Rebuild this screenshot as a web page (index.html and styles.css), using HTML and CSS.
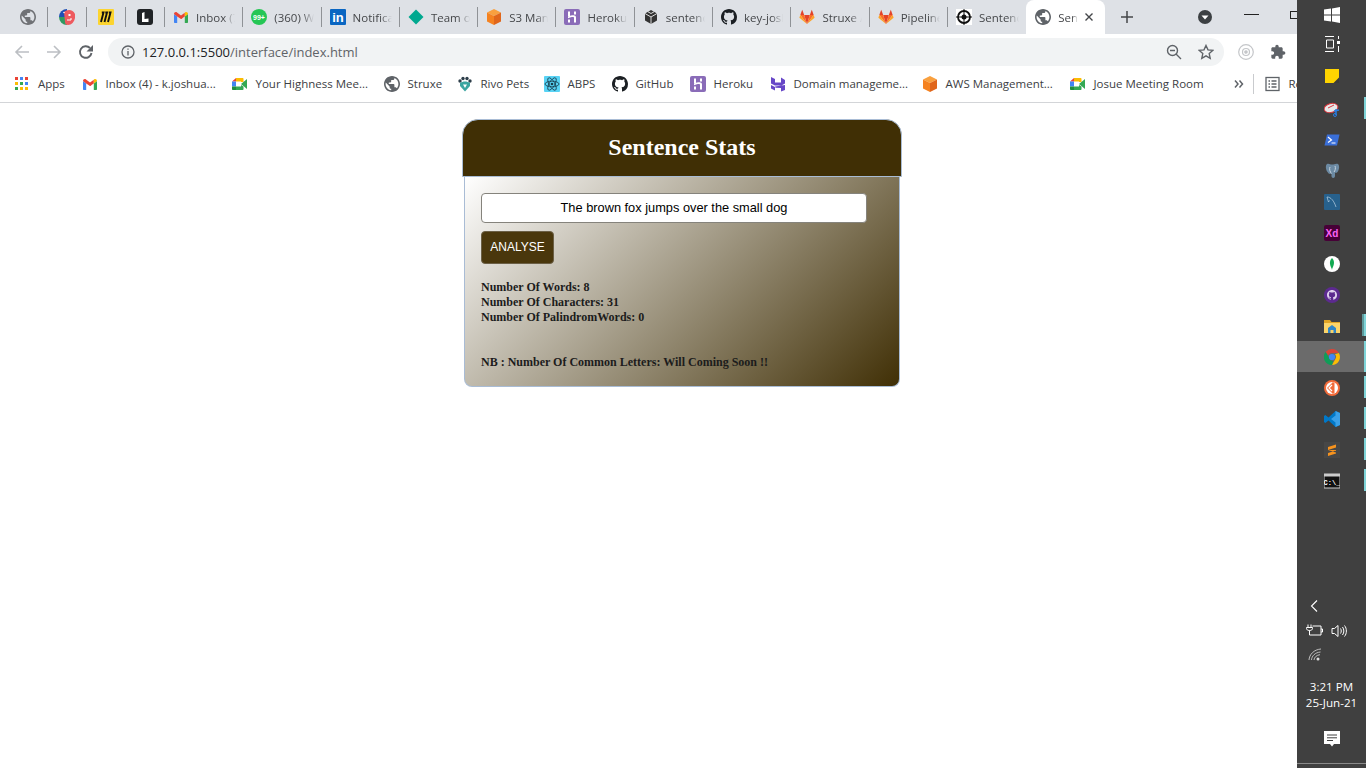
FILE: index.html
```html
<!DOCTYPE html>
<html lang="en">
<head>
  <meta http-equiv="Content-Type" content="text/html; charset=UTF-8">
  <title>Sentence Stats</title>
  <link rel="stylesheet" href="styles.css">
</head>
<body>
  <svg class="defs" aria-hidden="true">
    <symbol id="globe" viewBox="2 2 20 20"><path d="M12 2C6.48 2 2 6.48 2 12s4.48 10 10 10 10-4.48 10-10S17.52 2 12 2zm-1 17.93c-3.95-.49-7-3.85-7-7.93 0-.62.08-1.21.21-1.79L9 15v1c0 1.1.9 2 2 2v1.93zm6.9-2.54c-.26-.81-1-1.39-1.9-1.39h-1v-3c0-.55-.45-1-1-1H8v-2h2c.55 0 1-.45 1-1V7h2c1.1 0 2-.9 2-2v-.41c2.93 1.19 5 4.06 5 7.41 0 2.08-.8 3.97-2.1 5.39z"/></symbol>
    <symbol id="github" viewBox="0 0 16 16"><path d="M8 0C3.58 0 0 3.58 0 8c0 3.54 2.29 6.53 5.47 7.59.4.07.55-.17.55-.38 0-.19-.01-.82-.01-1.49-2.01.37-2.53-.49-2.69-.94-.09-.23-.48-.94-.82-1.13-.28-.15-.68-.52-.01-.53.63-.01 1.08.58 1.23.82.72 1.21 1.87.87 2.33.66.07-.52.28-.87.51-1.07-1.78-.2-3.64-.89-3.64-3.95 0-.87.31-1.59.82-2.15-.08-.2-.36-1.02.08-2.12 0 0 .67-.21 2.2.82.64-.18 1.32-.27 2-.27.68 0 1.36.09 2 .27 1.53-1.04 2.2-.82 2.2-.82.44 1.1.16 1.92.08 2.12.51.56.82 1.27.82 2.15 0 3.07-1.87 3.75-3.65 3.95.29.25.54.73.54 1.48 0 1.07-.01 1.93-.01 2.2 0 .21.15.46.55.38A8.013 8.013 0 0016 8c0-4.42-3.58-8-8-8z"/></symbol>
    <symbol id="gmail" viewBox="0 0 16 16">
      <path fill="#4285f4" d="M1 5v8c0 .6.4 1 1 1h2.2V7.4z"/>
      <path fill="#34a853" d="M15 5v8c0 .6-.4 1-1 1h-2.2V7.4z"/>
      <path fill="#ea4335" d="M1 5c0-1.700 1.800-2.500 3-1.500L8 6.600l1.500 2.400L8 10 4.200 7.400 1 5z"/>
      <path fill="#ea4335" d="M8 6.600l3.800-2.900v3.700L8 10z"/>
      <path fill="#fbbc04" d="M11.800 3.700l.2-.2c1.200-1 3-.2 3 1.500l-3.200 2.400z"/>
    </symbol>
    <symbol id="meet" viewBox="0 0 16 16">
      <path fill="#ea4335" d="M0 5.500L4 2v3.500z"/>
      <path fill="#fbbc04" d="M4 2h6.500c.6 0 1 .4 1 1v3L9 6V5.500H4z"/>
      <path fill="#4285f4" d="M0 5.500h4v5H0z"/>
      <path fill="#1e8e3e" d="M0 10.500h4V14H1c-.6 0-1-.4-1-1z"/>
      <path fill="#34a853" d="M4 10.500h5V9l2.500 1.500V13c0 .6-.4 1-1 1H4z"/>
      <path fill="#34a853" d="M9 8l6-5v10L9 8z"/>
    </symbol>
    <symbol id="heroku" viewBox="0 0 16 16">
      <rect width="16" height="16" rx="2" fill="#8a6cb8"/>
      <path fill="#fff" d="M4 2.500h2v4.500H4zM4 10.500h2v3H4zM10 2.500h2v3h-2zM4 7.300c2-.6 4-1.100 5.500-1.100 1.500 0 2.500.8 2.500 2.200v5.100h-2V9c0-.8-.4-1-1-1-1.200 0-3 .5-5 1.200z"/>
    </symbol>
    <symbol id="gitlab" viewBox="0 0 16 16">
      <polygon fill="#e24329" points="8,15 10.800,6 5.200,6"/>
      <polygon fill="#fc6d26" points="8,15 5.200,6 1.300,6"/>
      <polygon fill="#fc6d26" points="8,15 10.800,6 14.700,6"/>
      <polygon fill="#fca326" points="1.300,6 .4,8.800 8,15"/>
      <polygon fill="#fca326" points="14.700,6 15.600,8.800 8,15"/>
      <polygon fill="#e24329" points="1.300,6 5.200,6 3.200,.8"/>
      <polygon fill="#e24329" points="14.700,6 10.800,6 12.800,.8"/>
    </symbol>
    <symbol id="awsbox" viewBox="0 0 16 16">
      <polygon fill="#f9a03f" points="8,0 15,3.500 8,7 1,3.500"/>
      <polygon fill="#f58220" points="1,3.500 8,7 8,16 1,12.500"/>
      <polygon fill="#e0661b" points="15,3.500 8,7 8,16 15,12.500"/>
    </symbol>
  </svg>

  <div class="tabstrip">
    <div class="tab pinned"><svg class="ico soft"><use href="#globe"/></svg></div>
    <div class="tab pinned">
      <svg class="ico" viewBox="0 0 16 16"><path fill="#1f4fb5" d="M8 0a8 8 0 0 0-8 8h8z"/><path fill="#2f9a62" d="M0 8a8 8 0 0 0 8 8V8z"/><path fill="#ee5a5f" d="M5 3c3-3 9-3 11 2 1 5-2 11-7 11-2 0-3-1-3-3z"/><rect x="9.500" y="5" width="2" height="2" fill="#fff"/><path d="M8 11h4v-2" stroke="#fff" fill="none"/><circle cx="5" cy="3.500" r=".8" fill="#fff"/></svg>
    </div>
    <div class="tab pinned">
      <svg class="ico" viewBox="0 0 16 16"><rect width="16" height="16" rx="1" fill="#fcd42f"/><path d="M3 13L5.500 3.500H3.800M6.500 13L9 3.500H7.300M10 13l2.500-9.500h-1.700" stroke="#111" stroke-width="1.900" fill="none"/></svg>
    </div>
    <div class="tab pinned">
      <svg class="ico" viewBox="0 0 16 16"><rect width="16" height="16" rx="3" fill="#202326"/><path fill="#fff" d="M5 4l2.500-1v7l4-.5V13H5z"/></svg>
    </div>
    <div class="tab"><svg class="ico"><use href="#gmail"/></svg><span class="tab-title">Inbox (7)</span></div>
    <div class="tab">
      <svg class="ico" viewBox="0 0 16 16"><circle cx="8" cy="8" r="8" fill="#25c655"/><text x="8" y="11" class="badge-num">99+</text></svg>
      <span class="tab-title">(360) WhatsApp</span>
    </div>
    <div class="tab">
      <svg class="ico" viewBox="0 0 16 16"><rect width="16" height="16" rx="1" fill="#0a66c2"/><text x="8" y="13" class="li-text">in</text></svg>
      <span class="tab-title">Notifications</span>
    </div>
    <div class="tab">
      <svg class="ico" viewBox="0 0 16 16"><polygon fill="#00a88f" points="8,.5 15.500,8 8,15.500 .5,8"/></svg>
      <span class="tab-title">Team overview</span>
    </div>
    <div class="tab"><svg class="ico"><use href="#awsbox"/></svg><span class="tab-title">S3 Management</span></div>
    <div class="tab"><svg class="ico"><use href="#heroku"/></svg><span class="tab-title">Heroku</span></div>
    <div class="tab">
      <svg class="ico" viewBox="0 0 16 16"><polygon fill="#333" points="8,1 14,4.500 14,11.500 8,15 2,11.500 2,4.500"/><path d="M2 4.500l6 3.500 6-3.500M8 8v7M5 2.800l3 1.700 3-1.700" stroke="#ddd" fill="none"/></svg>
      <span class="tab-title">sentence-stats</span>
    </div>
    <div class="tab"><svg class="ico dark"><use href="#github"/></svg><span class="tab-title">key-joshua</span></div>
    <div class="tab"><svg class="ico"><use href="#gitlab"/></svg><span class="tab-title">Struxe / api</span></div>
    <div class="tab"><svg class="ico"><use href="#gitlab"/></svg><span class="tab-title">Pipelines</span></div>
    <div class="tab noline">
      <svg class="ico" viewBox="0 0 16 16"><rect width="16" height="16" fill="#fff"/><circle cx="8" cy="8" r="6" fill="none" stroke="#111" stroke-width="1.800"/><circle cx="8" cy="8" r="2.500" fill="#111"/><path d="M8 0v16M0 8h16" stroke="#111"/></svg>
      <span class="tab-title">Sentence Stats</span>
    </div>
    <div class="tab active">
      <svg class="ico gray"><use href="#globe"/></svg>
      <span class="tab-title">Sentence Stats</span>
      <svg class="tab-close" viewBox="0 0 8 8"><path d="M.5.5l7 7M7.500.5l-7 7"/></svg>
    </div>
    <svg class="newtab" viewBox="0 0 12 12"><path d="M6 0v12M0 6h12"/></svg>
    <svg class="tabsearch" viewBox="0 0 14 14"><circle cx="7" cy="7" r="7"/><path d="M3.500 5.500h7L7 9.500z" fill="#fff"/></svg>
    <div class="win-min"></div>
    <div class="win-max"></div>
  </div>

  <div class="toolbar">
    <svg class="tool faded" viewBox="0 0 16 16"><path d="M15 8H2M8 2L2 8l6 6"/></svg>
    <svg class="tool faded" viewBox="0 0 16 16"><path d="M1 8h13M8 2l6 6-6 6"/></svg>
    <svg class="tool" viewBox="0 0 16 16"><path d="M13.500 9A5.800 5.800 0 1 1 12 4"/><path class="solid" d="M15 1v6.500H8.500z"/></svg>
    <div class="omnibox">
      <svg class="info" viewBox="0 0 14 14"><circle cx="7" cy="7" r="6"/><path d="M7 6v4.500M7 3.500v1.300"/></svg>
      <span class="url"><b>127.0.0.1</b><b>:5500</b>/interface/index.html</span>
      <svg class="zoomout" viewBox="0 0 16 16"><circle cx="6.500" cy="6.500" r="5"/><path d="M10 10l5 5M4 6.500h5"/></svg>
      <svg class="star" viewBox="0 0 16 16"><path d="M8 1.500l2 4.400 4.800.5-3.600 3.200 1 4.700L8 11.900l-4.200 2.400 1-4.700L1.200 6.400 6 5.900z"/></svg>
    </div>
    <svg class="ext-ring" viewBox="0 0 16 16"><circle cx="8" cy="8" r="7.300"/><circle cx="8" cy="8" r="3.500"/><circle cx="8" cy="8" r="1.200" class="solid"/></svg>
    <svg class="puzzle" viewBox="0 0 24 24"><path d="M20.500 11H19V7c0-1.100-.9-2-2-2h-4V3.500C13 2.120 11.880 1 10.500 1S8 2.120 8 3.500V5H4c-1.100 0-1.990.9-1.990 2v3.800H3.500c1.490 0 2.700 1.210 2.700 2.700s-1.210 2.700-2.700 2.700H2V20c0 1.100.9 2 2 2h3.800v-1.500c0-1.490 1.210-2.700 2.700-2.700 1.490 0 2.700 1.210 2.700 2.700V22H17c1.100 0 2-.9 2-2v-4h1.500c1.380 0 2.500-1.120 2.500-2.500S21.880 11 20.500 11z"/></svg>
  </div>

  <div class="bookmarks">
    <div class="bm">
      <svg class="ico" viewBox="0 0 14 14">
        <rect width="3" height="3" fill="#ea4335"/><rect x="5" width="3" height="3" fill="#4285f4"/><rect x="10" width="3" height="3" fill="#ea4335"/>
        <rect y="5" width="3" height="3" fill="#fbbc04"/><rect x="5" y="5" width="3" height="3" fill="#34a853"/><rect x="10" y="5" width="3" height="3" fill="#4285f4"/>
        <rect y="10" width="3" height="3" fill="#34a853"/><rect x="5" y="10" width="3" height="3" fill="#fbbc04"/><rect x="10" y="10" width="3" height="3" fill="#fbbc04"/>
      </svg>
      <span>Apps</span>
    </div>
    <div class="bm"><svg class="ico"><use href="#gmail"/></svg><span>Inbox (4) - k.joshua...</span></div>
    <div class="bm"><svg class="ico"><use href="#meet"/></svg><span>Your Highness Mee...</span></div>
    <div class="bm"><svg class="ico gray"><use href="#globe"/></svg><span>Struxe</span></div>
    <div class="bm">
      <svg class="ico" viewBox="0 0 16 16"><circle cx="3" cy="5" r="1.700" fill="#2d3e4a"/><circle cx="6" cy="2.500" r="1.700" fill="#2d3e4a"/><circle cx="10" cy="2.500" r="1.700" fill="#2d3e4a"/><circle cx="13" cy="5" r="1.700" fill="#2d3e4a"/><path d="M3 7c3-2 7-2 10 0v3l-5 5.500L3 10z" fill="#3aa5a0"/><path d="M6 8.500h4L8 12z" fill="#fff"/></svg>
      <span>Rivo Pets</span>
    </div>
    <div class="bm">
      <svg class="ico" viewBox="0 0 16 16"><rect width="16" height="16" rx="1" fill="#58d3f5"/><g fill="none" stroke="#163a4a" stroke-width=".8"><ellipse cx="8" cy="8" rx="7" ry="2.800"/><ellipse cx="8" cy="8" rx="7" ry="2.800" transform="rotate(60 8 8)"/><ellipse cx="8" cy="8" rx="7" ry="2.800" transform="rotate(120 8 8)"/></g><circle cx="8" cy="8" r="1.300" fill="#163a4a"/></svg>
      <span>ABPS</span>
    </div>
    <div class="bm"><svg class="ico dark"><use href="#github"/></svg><span>GitHub</span></div>
    <div class="bm"><svg class="ico"><use href="#heroku"/></svg><span>Heroku</span></div>
    <div class="bm">
      <svg class="ico" viewBox="0 0 16 16"><path fill="#6747c7" d="M1 1l4 2v3.500l6 .1V1.500L15 4v3.500l-3.500 2H5L1 7.500zM1 9l4 2v3.500L1 12.500zM15 9v5l-4 1.500V12l-5.500-.2L5 10.500z"/></svg>
      <span>Domain manageme...</span>
    </div>
    <div class="bm"><svg class="ico"><use href="#awsbox"/></svg><span>AWS Management...</span></div>
    <div class="bm"><svg class="ico"><use href="#meet"/></svg><span>Josue Meeting Room</span></div>
    <svg class="more" viewBox="0 0 10 8"><path d="M1 .5L4 4 1 7.500M5.500.5l3 3.500-3 3.500"/></svg>
    <div class="bm-sep"></div>
    <div class="bm reading">
      <svg class="ico list" viewBox="0 0 16 16"><rect x="1" y="1.500" width="13" height="13"/><path d="M3.500 5h1.500M6.500 5h5M3.500 8h1.500M6.500 8h5M3.500 11h1.500M6.500 11h5"/></svg>
      <span>Reading list</span>
    </div>
  </div>

  <main class="page">
    <div class="card">
      <div class="card-head">Sentence Stats</div>
      <div class="card-body">
        <input class="sentence" type="text" value="The brown fox jumps over the small dog">
        <button class="analyse">ANALYSE</button>
        <div class="stats">
          <div>Number Of Words: 8</div>
          <div>Number Of Characters: 31</div>
          <div>Number Of PalindromWords: 0</div>
        </div>
        <div class="note">NB : Number Of Common Letters: Will Coming Soon !!</div>
      </div>
    </div>
  </main>

  <aside class="taskbar">
    <div class="task start">
      <svg class="tk" viewBox="0 0 16 16"><path fill="#fff" d="M0 2.500L7 1.500V7.500H0zM8 1.400L16 0V7.500H8zM0 8.500H7V14.500L0 13.500zM8 8.500H16V16L8 14.600z"/></svg>
    </div>
    <div class="task view">
      <svg class="tk" viewBox="0 0 16 16" fill="none" stroke="#fff"><path d="M1 .5h9M1 15.500h9M2.500 4h7v8h-7zM14.500 0v3M14.500 10v6"/><rect x="13" y="5" width="3" height="3" fill="#fff" stroke="none"/></svg>
    </div>
    <div class="task sticky">
      <svg class="tk" viewBox="0 0 16 16"><rect width="14" height="14" x="1" y="1" fill="#ffd400"/><path fill="#3a3a3a" d="M15 9.500V15H9.500z"/></svg>
    </div>
    <div class="task on">
      <svg class="tk" viewBox="0 0 16 16"><ellipse cx="7" cy="7" rx="7" ry="4.500" fill="#e8e8e8" stroke="#d9363e" transform="rotate(-15 7 7)"/><path d="M4 7l6-3" stroke="#d9363e"/><path d="M10 10l5-1M12 8v6" stroke="#2a7de1" stroke-width="1.500"/><circle cx="11" cy="14" r="1.500" fill="none" stroke="#2a7de1"/></svg>
    </div>
    <div class="task">
      <svg class="tk" viewBox="0 0 16 16"><path fill="#3a6fd8" d="M3 2.500h12.500L13 13.500H.5z"/><path d="M4 5l3.500 3L4 10.500M7.500 11h4" stroke="#fff" fill="none" stroke-width="1.200"/></svg>
    </div>
    <div class="task">
      <svg class="tk" viewBox="0 0 16 16"><path fill="#6c8aa3" d="M3 1c2-1 3 .5 5 .5S12 0 14 1c2 2 1 6-.5 8-.8 1-2 1-2.500.5V13c0 2-2 2.500-3 1.500-.7-.8-.5-2-.5-4-1.500 1-3 .5-4-1.500C2 7 1 3 3 1z"/><path d="M6 4c-1 2 0 5 1.500 6.500M11 3c1 2 0 5-1 6" stroke="#c7d4df" fill="none"/></svg>
    </div>
    <div class="task">
      <svg class="tk" viewBox="0 0 16 16"><rect width="16" height="16" rx="1" fill="#27618d"/><path d="M3 3c4 0 7 4 9 10M3 3l1.500 5 1-1.500" stroke="#a9c5da" fill="none" stroke-width=".8"/></svg>
    </div>
    <div class="task">
      <svg class="tk" viewBox="0 0 16 16"><rect width="16" height="16" rx="2" fill="#470137"/><text x="8" y="12" class="xd-text">Xd</text></svg>
    </div>
    <div class="task">
      <svg class="tk" viewBox="0 0 16 16"><circle cx="8" cy="8" r="8" fill="#fff"/><path fill="#13aa52" d="M8 2c2.500 2.500 2.800 6 .3 10.500L8 14l-.4-1.500C5.200 8 5.500 4.500 8 2z"/></svg>
    </div>
    <div class="task">
      <svg class="tk" viewBox="0 0 16 16"><circle cx="8" cy="8" r="8" fill="#5c2a8f"/><use href="#github" x="3" y="3" width="10" height="10" fill="#e0d4ee"/></svg>
    </div>
    <div class="task on two">
      <svg class="tk" viewBox="0 0 16 16"><path fill="#e0a526" d="M0 2h6l1.500 2H16v3H0z"/><path fill="#fbd469" d="M0 5h16v10H0z"/><path fill="#2f86c9" d="M4 10l4-3 4 3v5H9.500v-3h-3v3H4z"/></svg>
    </div>
    <div class="task current">
      <svg class="tk" viewBox="0 0 16 16">
        <path fill="#db4437" d="M8 0a8 8 0 0 1 6.900 4H8a4 4 0 0 0-3.700 2.400L1.700 2.900A8 8 0 0 1 8 0z"/>
        <path fill="#fbbc04" d="M14.900 4A8 8 0 0 1 8 16l3.400-6A4 4 0 0 0 11 5.200z"/>
        <path fill="#0f9d58" d="M8 16A8 8 0 0 1 1.700 2.900l3.500 6.100A4 4 0 0 0 9 11.900z"/>
        <circle cx="8" cy="8" r="3.100" fill="#4285f4"/>
      </svg>
    </div>
    <div class="task on">
      <svg class="tk" viewBox="0 0 16 16"><circle cx="8" cy="8" r="8" fill="#f26b3a"/><circle cx="8" cy="8" r="6" fill="#fff"/><path fill="#f26b3a" d="M3 8l6-6 1.500 1.500v9L9 14z"/><path d="M8 5l-3 3 3 3" stroke="#fff" fill="none" stroke-width="1.200"/></svg>
    </div>
    <div class="task on">
      <svg class="tk" viewBox="0 0 16 16"><path fill="#0078c8" d="M11.500 0L16 2v12l-4.500 2-7-6.500L1.300 12 0 11V5l1.300-1 3.200 2.500z"/><path fill="#3aa0e8" d="M11.500 4.500L7 8l4.500 3.500zM11.500 0L16 2v12l-4.500 2z"/></svg>
    </div>
    <div class="task on">
      <svg class="tk" viewBox="0 0 16 16"><rect width="16" height="16" fill="#474747"/><path fill="#f7931e" d="M12 2.500v3L4 8v-3zM4 8l8 2.500v-2.500zM12 8.500v3L4 14v-3z"/></svg>
    </div>
    <div class="task on">
      <svg class="tk" viewBox="0 0 16 16"><rect y="1" width="16" height="14" fill="#111" stroke="#ccc"/><rect y="1" width="16" height="2.500" fill="#ccc"/><text x="8" y="11.500" class="cmd-text">C:\_</text></svg>
    </div>

    <div class="tray">
      <svg class="chev" viewBox="0 0 8 12"><path d="M7 .5L1.500 6 7 11.500"/></svg>
      <div class="tray-row">
        <svg class="batt" viewBox="0 0 17 12"><path d="M2 .5v3M5 .5v3M.5 3.500h6v1c0 1-1 2-3 2s-3-1-3-2zM3.500 6.500v4.500H15V2H6.500M15 5h1.500v3H15"/></svg>
        <svg class="vol" viewBox="0 0 16 14"><path d="M1 4.500h2.500L7 1.500v11L3.500 9.500H1zM9.500 4.500c1 1.500 1 3.500 0 5M11.500 3c1.800 2.500 1.800 5.500 0 8M13.500 1.500c2.500 3 2.500 8 0 11"/></svg>
      </div>
      <svg class="wifi" viewBox="0 0 14 13"><path d="M1 12c.3-5.500 5-10.500 12-11M3.500 12c.3-4 3.500-7.500 9-8M6 12c.2-2.500 2.500-5 6-5.300"/><circle class="solid" cx="10" cy="11" r="1.500"/></svg>
      <div class="clock"><div>3:21 PM</div><div>25-Jun-21</div></div>
      <svg class="notif" viewBox="0 0 16 16"><path fill="#fff" d="M0 0h16v13h-6l-2 2.500L6 13H0z"/><path d="M3 4h10M3 6.800h10M3 9.500h6" stroke="#404040"/></svg>
    </div>
  </aside>
</body>
</html>
```

FILE: styles.css
```css
* {
  box-sizing: border-box;
}
html, body {
  height: 100%;
}
body {
  margin: 0;
  overflow: hidden;
  background: #fff;
  font-family: "Open Sans", "Noto Sans", sans-serif;
}
.defs {
  width: 0;
  height: 0;
  position: absolute;
}
.ico {
  width: 16px;
  height: 16px;
  flex: none;
}
.gray { fill: #5f6368; }
.soft { fill: #6f7175; }
.dark { fill: #1b1f23; }

/* tabs */
.tabstrip {
  display: flex;
  align-items: center;
  height: 34px;
  padding-left: 9px;
  background: #dee1e6;
}
.tab {
  flex: none;
  display: flex;
  align-items: center;
  gap: 7px;
  width: 78.3px;
  height: 20px;
  padding: 0 7px 0 8px;
  border-right: 1px solid #8f9296;
  font-size: 11.500px;
  color: #45474a;
}
.tab.pinned {
  width: 39px;
  padding: 0;
  justify-content: center;
}
.tab.noline {
  border-right: 0;
}
.tab-title {
  flex: 1;
  min-width: 0;
  overflow: hidden;
  white-space: nowrap;
  -webkit-mask-image: linear-gradient(to right, #000 70%, transparent);
  mask-image: linear-gradient(to right, #000 70%, transparent);
}
.tab.active {
  align-self: stretch;
  height: 34px;
  padding: 0 12px 0 9px;
  border: 0;
  border-radius: 8px 8px 0 0;
  background: #fff;
}
.tab-close {
  flex: none;
  width: 8px;
  height: 8px;
  stroke: #45474a;
  stroke-width: 1.400;
}
.newtab {
  flex: none;
  width: 12px;
  height: 12px;
  margin-left: 16px;
  stroke: #45474a;
  stroke-width: 1.500;
}
.tabsearch {
  flex: none;
  width: 14px;
  height: 14px;
  margin-left: 65px;
  fill: #3c4043;
}
.win-min {
  flex: none;
  width: 15px;
  height: 1px;
  margin-left: 32px;
  margin-bottom: 5px;
  background: #222;
}
.win-max {
  flex: none;
  width: 10px;
  height: 8px;
  margin-left: 31px;
  margin-bottom: 5px;
  border: 1px solid #222;
}

/* toolbar */
.toolbar {
  display: flex;
  align-items: center;
  height: 32px;
  padding: 4px 0 0 14px;
  background: #fff;
}
.tool {
  flex: none;
  width: 16px;
  height: 16px;
  margin-right: 16px;
  fill: none;
  stroke: #5f6368;
  stroke-width: 1.900;
}
.tool:nth-child(3) {
  margin-right: 14px;
}
.tool .solid {
  fill: #5f6368;
  stroke: none;
}
.tool.faded {
  stroke: #bcbfc3;
  stroke-width: 1.600;
}
.omnibox {
  flex: none;
  display: flex;
  align-items: center;
  width: 1116px;
  height: 28px;
  padding: 0 10px 0 13px;
  border-radius: 14px;
  background: #f1f3f4;
}
.info {
  flex: none;
  width: 14px;
  height: 14px;
  fill: none;
  stroke: #5f6368;
  stroke-width: 1.300;
}
.url {
  margin-left: 7px;
  font-size: 13px;
  color: #5f6368;
  white-space: nowrap;
}
.url b {
  font-weight: 400;
  color: #202124;
}
.zoomout {
  flex: none;
  width: 16px;
  height: 16px;
  margin-left: auto;
  fill: none;
  stroke: #5f6368;
  stroke-width: 1.400;
}
.star {
  flex: none;
  width: 16px;
  height: 16px;
  margin-left: 16px;
  fill: none;
  stroke: #5f6368;
  stroke-width: 1.400;
}
.ext-ring {
  flex: none;
  width: 16px;
  height: 16px;
  margin-left: 14px;
  fill: none;
  stroke: #c4c6c9;
  stroke-width: 1.200;
}
.ext-ring .solid {
  fill: #c4c6c9;
}
.puzzle {
  flex: none;
  width: 16px;
  height: 16px;
  margin-left: 16px;
  fill: #5f6368;
}

/* bookmarks */
.bookmarks {
  display: grid;
  grid-template-columns: 67px 150px 152px 73px 87px 68px 78px 80px 152px 148px 164px 19px 12px auto;
  align-items: center;
  height: 37px;
  padding: 0 0 1px 15px;
  border-bottom: 1px solid #d3d5d8;
  background: #fff;
  font-size: 11.500px;
  color: #3c4043;
}
.bm {
  display: flex;
  align-items: center;
  gap: 7.500px;
  white-space: nowrap;
}
.bm:first-child {
  gap: 9px;
}
.bm:first-child .ico {
  width: 14px;
  height: 14px;
}
.more {
  width: 10px;
  height: 8px;
  fill: none;
  stroke: #5f6368;
  stroke-width: 1.500;
}
.bm-sep {
  width: 1px;
  height: 20px;
  background: #c9cbce;
}
.list {
  fill: none;
  stroke: #5f6368;
  stroke-width: 1.300;
}

/* page */
.page {
  padding: 16px 2px 0 0;
}
.card {
  width: 440px;
  margin: 0 auto;
}
.card-head {
  height: 58px;
  border: 1px solid #a9bcd5;
  border-radius: 16px 16px 0 0;
  background: #402f05;
  color: #fff;
  font: bold 24px/54px "Liberation Serif", serif;
  text-align: center;
}
.card-body {
  margin: 0 2px;
  padding: 16px;
  border: 1px solid #a9bcd5;
  border-top: 0;
  border-radius: 0 0 8px 8px;
  background: linear-gradient(135deg, #fff, #402f05);
}
.sentence {
  display: block;
  width: 386px;
  height: 30px;
  padding: 0 8px 2px;
  border: 1px solid #85837c;
  border-radius: 4px;
  background: #fff;
  color: #000;
  font: 12.8px "Liberation Sans", Arial, sans-serif;
  text-align: center;
}
.analyse {
  display: block;
  width: 73px;
  height: 33px;
  margin-top: 8px;
  padding: 0 0 2px;
  border: 1px solid #6b5f45;
  border-radius: 4px;
  background: #4a370c;
  color: #fff;
  font: 12px "Liberation Sans", Arial, sans-serif;
}
.stats, .note {
  color: #1c1c1c;
  font: bold 12px/15px "Liberation Serif", serif;
}
.stats {
  margin-top: 16px;
}
.note {
  margin-top: 30px;
}

/* taskbar, drawn over the right end of the window */
.taskbar {
  position: fixed;
  top: 0;
  right: 0;
  bottom: 0;
  width: 69px;
  display: flex;
  flex-direction: column;
  background: #404040;
  border-bottom: 4px solid #404040;
}
.task {
  position: relative;
  flex: none;
  display: flex;
  align-items: center;
  justify-content: center;
  height: 31px;
}
.task.start {
  height: 30px;
}
.task.view {
  height: 28px;
}
.task.sticky {
  height: 35px;
}
.task.on::after, .task.current::after {
  content: "";
  position: absolute;
  top: 4px;
  right: 0;
  width: 2px;
  height: 22px;
  background: #7fd4d8;
}
.task.two::before {
  content: "";
  position: absolute;
  top: 4px;
  right: 2px;
  width: 2px;
  height: 22px;
  background: #5f9a9c;
}
.task.current {
  background: #6b6b6b;
}
.task.current::after {
  top: 0;
  height: 31px;
}
.tk {
  width: 16px;
  height: 16px;
}
.xd-text {
  fill: #ff61f6;
  font: bold 10px "Liberation Sans", sans-serif;
  text-anchor: middle;
}
.cmd-text {
  fill: #fff;
  font: bold 7px "Liberation Mono", monospace;
  text-anchor: middle;
}
.badge-num {
  fill: #fff;
  font: bold 7px "Liberation Sans", sans-serif;
  text-anchor: middle;
}
.li-text {
  fill: #fff;
  font: bold 13px "Liberation Sans", sans-serif;
  text-anchor: middle;
}
.tray {
  margin-top: auto;
  display: flex;
  flex-direction: column;
  align-items: center;
  padding-bottom: 16px;
  border-bottom: 1px solid #8a8a8a;
  color: #fff;
}
.chev {
  align-self: flex-start;
  width: 8px;
  height: 12px;
  margin-left: 13px;
  fill: none;
  stroke: #fff;
  stroke-width: 1.100;
}
.tray-row {
  align-self: flex-start;
  display: flex;
  gap: 8px;
  margin: 12px 0 0 9px;
}
.batt {
  width: 17px;
  height: 12px;
  fill: none;
  stroke: #fff;
}
.vol {
  width: 16px;
  height: 14px;
  fill: none;
  stroke: #fff;
}
.wifi {
  align-self: flex-start;
  width: 14px;
  height: 13px;
  margin: 10px 0 0 11px;
  fill: none;
  stroke: #ddd;
  stroke-width: .8;
}
.wifi .solid {
  fill: #ddd;
  stroke: none;
}
.clock {
  margin-top: 18px;
  font-size: 11.600px;
  line-height: 16px;
  text-align: center;
}
.notif {
  width: 16px;
  height: 16px;
  margin-top: 20px;
}
```
